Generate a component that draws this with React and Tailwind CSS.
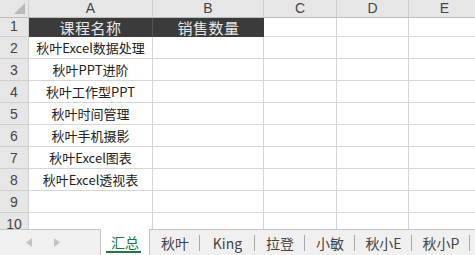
import React from 'react'

const cols = [
  { key: 'A', w: 124 },
  { key: 'B', w: 111 },
  { key: 'C', w: 73 },
  { key: 'D', w: 72 },
  { key: 'E', w: 72 },
]

const courses = [
  '课程名称',
  '秋叶Excel数据处理',
  '秋叶PPT进阶',
  '秋叶工作型PPT',
  '秋叶时间管理',
  '秋叶手机摄影',
  '秋叶Excel图表',
  '秋叶Excel透视表',
  '',
  '',
]

const tabs = ['汇总', '秋叶', 'King', '拉登', '小敏', '秋小E', '秋小P']
const tabWidths = [50, 50, 55, 50, 50, 57, 58]

const font = { fontFamily: '"Noto Sans CJK SC", "Liberation Sans", sans-serif' }

export default function App() {
  return (
    <div className="w-[475px] h-[255px] overflow-hidden bg-white flex flex-col" style={font}>
      {/* sheet grid */}
      <div className="h-[229px] overflow-hidden">
        {/* column headers */}
        <div className="flex h-[18px] bg-[#e6e6e6] border-b border-[#bdbdbd]">
          <div className="w-[29px] shrink-0 border-r border-[#cfcfcf] relative">
            <div className="absolute right-[3px] bottom-[3px] w-0 h-0 border-l-[11px] border-l-transparent border-b-[11px] border-b-[#b8b8b8]" />
          </div>
          {cols.map((c) => (
            <div
              key={c.key}
              style={{ width: c.w }}
              className="shrink-0 border-r border-[#cfcfcf] flex items-end justify-center text-[14px] leading-[17px] text-[#444] font-['Liberation_Sans']"
            >
              {c.key}
            </div>
          ))}
        </div>

        {/* rows */}
        {courses.map((name, i) => {
          const head = i === 0
          return (
            <div key={i} className={`flex ${head ? 'h-[19px]' : 'h-[22px]'}`}>
              <div className="w-[29px] shrink-0 bg-[#e6e6e6] border-r border-b border-[#cfcfcf] flex items-end justify-center text-[14px] leading-[17px] text-[#444] font-['Liberation_Sans'] pb-[1px]">
                {i + 1}
              </div>
              {cols.map((c, j) => {
                const dark = head && j < 2
                return (
                  <div
                    key={c.key}
                    style={{ width: c.w }}
                    className={`shrink-0 flex items-end justify-center overflow-visible whitespace-nowrap ${
                      dark
                        ? 'bg-[#3b3b3b] text-[#e8e8e8] text-[15px] leading-[19px] tracking-[0.5px] ' + (j === 0 ? 'border-r border-[#555]' : '')
                        : 'border-r border-b border-[#d6d6d6] text-[#222] text-[13px] leading-[20px]'
                    }`}
                  >
                    {j === 0 ? name : head && j === 1 ? '销售数量' : ''}
                  </div>
                )
              })}
            </div>
          )
        })}
      </div>

      {/* sheet tabs */}
      <div className="h-[26px] flex bg-[#f0f0f0] border-t border-[#c4c4c4] text-[14px]">
        <div className="w-[100px] shrink-0 flex items-center pl-[26px] gap-[22px] text-[#c0c0c0]">
          <svg width="6" height="9" viewBox="0 0 6 9"><path d="M6 0 L0 4.5 L6 9 Z" fill="#c4c4c4" /></svg>
          <svg width="6" height="9" viewBox="0 0 6 9"><path d="M0 0 L6 4.5 L0 9 Z" fill="#c4c4c4" /></svg>
        </div>
        {tabs.map((t, i) => {
          const active = i === 0
          return (
            <div
              key={t}
              style={{ width: tabWidths[i] }}
              className={`shrink-0 relative flex items-center justify-center ${
                active ? 'bg-white -mt-px border-x border-[#c4c4c4] text-[#217346]' : 'text-[#444]'
              }`}
            >
              <span className="leading-[20px]">{t}</span>
              {active && <div className="absolute left-[5px] right-[8px] bottom-[2px] h-[2px] bg-[#217346]" />}
              {!active && <div className="absolute right-0 top-[5px] h-[16px] w-px bg-[#a8a8a8]" />}
            </div>
          )
        })}
      </div>
    </div>
  )
}
